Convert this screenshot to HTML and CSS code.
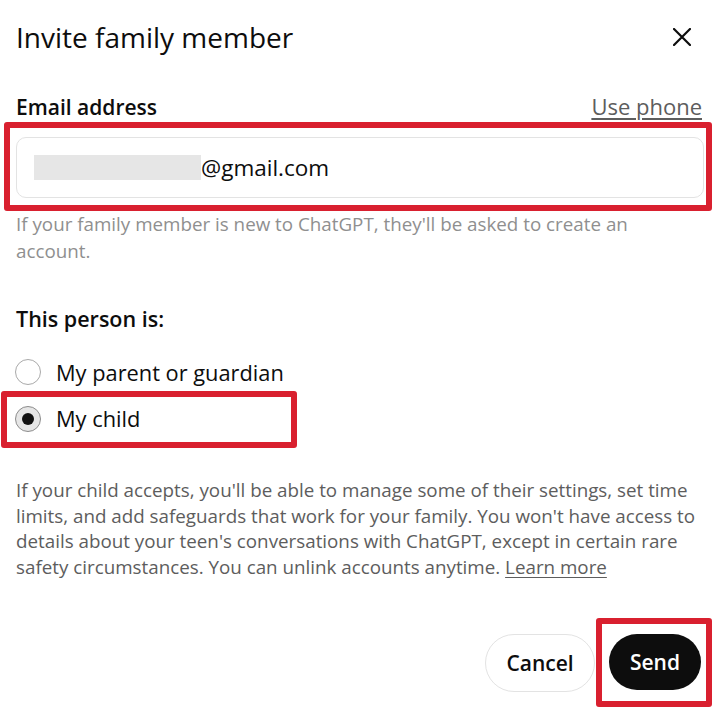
FILE: index.html
```html
<!DOCTYPE html>
<html lang="en">

<head>
    <meta charset="UTF-8">
    <meta name="viewport" content="width=device-width, initial-scale=1.0">
    <title>Invite family member</title>
    <link rel="stylesheet" href="styles.css">
</head>

<body>
    <div class="dialog">
        <!-- Header -->
        <div class="dialog-header">
            <h1 class="dialog-title">Invite family member</h1>
            <button class="close-btn" aria-label="Close">
                <svg width="18" height="18" viewBox="0 0 18 18">
                    <path d="M1 1 L17 17 M17 1 L1 17" stroke="#0d0d0d" stroke-width="2.2" stroke-linecap="round" fill="none"/>
                </svg>
            </button>
        </div>

        <!-- Email field -->
        <div class="field-label-row">
            <label class="field-label">Email address</label>
            <a class="alt-link" href="#">Use phone</a>
        </div>
        <div class="highlight highlight-email">
            <div class="email-input">
                <span class="redacted"></span>
                <span class="email-domain">@gmail.com</span>
            </div>
        </div>
        <p class="help-text">If your family member is new to ChatGPT, they'll be asked to create an account.</p>

        <!-- Relationship -->
        <div class="group-label">This person is:</div>
        <div class="radio-row radio-first">
            <span class="radio"></span>
            <span class="radio-label">My parent or guardian</span>
        </div>
        <div class="highlight highlight-radio">
            <div class="radio-row">
                <span class="radio checked"></span>
                <span class="radio-label">My child</span>
            </div>
        </div>

        <p class="info-text">If your child accepts, you'll be able to manage some of their settings, set time limits, and add safeguards that work for your family. You won't have access to details about your teen's conversations with ChatGPT, except in certain rare safety circumstances. You can unlink accounts anytime. <a href="#">Learn more</a></p>

        <!-- Actions -->
        <div class="actions">
            <button class="cancel-btn">Cancel</button>
            <div class="highlight highlight-send">
                <button class="send-btn">Send</button>
            </div>
        </div>
    </div>
</body>

</html>
```

FILE: styles.css
```css
/* Page */
body {
    font-family: 'Open Sans', 'Noto Sans', sans-serif;
    background-color: white;
    color: #0d0d0d;
    margin: 0;
}

.dialog {
    padding: 19px 14px 0 16px;
}

/* Header */
.dialog-header {
    display: flex;
    justify-content: space-between;
    align-items: center;
}

.dialog-title {
    margin: 0;
    font-size: 28px;
    line-height: 36px;
    font-weight: 400;
}

.close-btn {
    width: 32px;
    height: 32px;
    margin-right: 5px;
    padding: 0;
    border: none;
    background: none;
    display: flex;
    align-items: center;
    justify-content: center;
    cursor: pointer;
}

/* Red annotation boxes */
.highlight {
    border: 6px solid #d9202f;
    border-radius: 3px;
}

/* Email field */
.field-label-row {
    margin-top: 37px;
    display: flex;
    justify-content: space-between;
    align-items: baseline;
}

.field-label {
    font-size: 21px;
    line-height: 28px;
    font-weight: 600;
}

.alt-link {
    font-size: 22px;
    line-height: 28px;
    color: #5d5d5d;
    text-decoration: underline;
    text-underline-offset: 3px;
    margin-right: 1px;
}

.highlight-email {
    margin: 1px -9px 0 -12px;
    padding: 9px 2px 7px 6px;
}

.email-input {
    height: 59px;
    border: 1px solid #e3e3e3;
    border-radius: 10px;
    display: flex;
    align-items: center;
    padding-left: 17px;
}

.redacted {
    width: 167px;
    height: 25px;
    background-color: #e6e6e6;
}

.email-domain {
    font-size: 22.5px;
    color: #0d0d0d;
}

.help-text {
    margin: 0;
    font-size: 18.8px;
    line-height: 27px;
    color: #8f8f8f;
}

/* Radio group */
.group-label {
    margin-top: 40px;
    font-size: 21.5px;
    line-height: 28px;
    font-weight: 600;
}

.radio-row {
    display: flex;
    align-items: center;
    gap: 15px;
    height: 43px;
}

.radio-first {
    margin-top: 20px;
    margin-left: -1px;
    height: 38px;
}

.radio {
    width: 24px;
    height: 24px;
    border: 1px solid #a9a9a9;
    border-radius: 50%;
    background-color: white;
    display: flex;
    align-items: center;
    justify-content: center;
    flex-shrink: 0;
}

.radio.checked {
    border-color: #8c8c8c;
    background-color: #e6e6e6;
}

.radio.checked::after {
    content: "";
    width: 12px;
    height: 12px;
    border-radius: 50%;
    background-color: #111;
}

.radio-label {
    font-size: 21.8px;
    color: #0d0d0d;
}

.highlight-radio {
    width: 276px;
    margin-left: -15px;
    padding: 0 0 2px 8px;
}

/* Info paragraph */
.info-text {
    margin: 30px 0 0;
    font-size: 18.8px;
    line-height: 25.5px;
    color: #5d5d5d;
}

.info-text a {
    color: #5d5d5d;
    text-decoration: underline;
    text-underline-offset: 3px;
}

/* Actions */
.actions {
    margin: 38px -9px 0 0;
    display: flex;
    justify-content: flex-end;
    align-items: center;
    gap: 1px;
}

.actions button {
    font-family: inherit;
    font-size: 21px;
    font-weight: 600;
    border-radius: 30px;
    cursor: pointer;
}

.cancel-btn {
    width: 110px;
    height: 58px;
    background-color: white;
    color: #0d0d0d;
    border: 1px solid #e3e3e3;
}

.highlight-send {
    padding: 10px 5px 11px 7px;
}

.send-btn {
    width: 92px;
    height: 56px;
    background-color: #0d0d0d;
    color: white;
    border: none;
    display: block;
}
```
